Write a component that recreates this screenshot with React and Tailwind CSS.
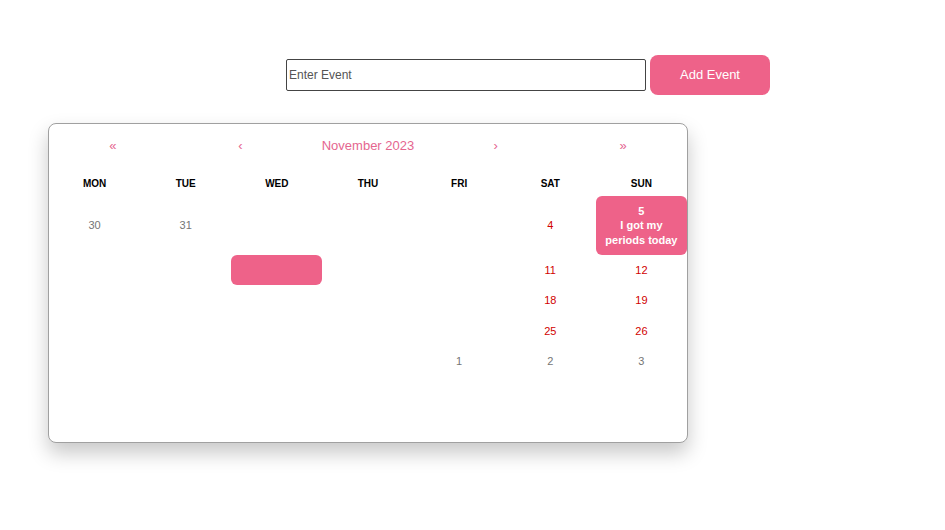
import React from "react";

const PINK = "bg-[#ee6289]";

function Cell({ children, kind, h }) {
  const base = "flex items-center justify-center text-center text-[11px] leading-[14.5px]";
  if (kind === "tile")
    return <div className={`${base} ${PINK} text-white font-bold rounded-md ${h}`}>{children}</div>;
  if (kind === "blank-tile")
    return <div className={`${base} ${PINK} text-transparent rounded-md ${h}`}>{children}</div>;
  const color =
    kind === "gray" ? "text-[#757575]" : kind === "red" ? "text-[#d10000]" : "text-white";
  return <div className={`${base} ${color} ${h}`}>{children}</div>;
}

export default function App() {
  const rows = [
    [["30", "gray"], ["31", "gray"], ["1", "w"], ["2", "w"], ["3", "w"], ["4", "red"], ["tile", "tile"]],
    [["6", "w"], ["7", "w"], ["8", "blank-tile"], ["9", "w"], ["10", "w"], ["11", "red"], ["12", "red"]],
    [["13", "w"], ["14", "w"], ["15", "w"], ["16", "w"], ["17", "w"], ["18", "red"], ["19", "red"]],
    [["20", "w"], ["21", "w"], ["22", "w"], ["23", "w"], ["24", "w"], ["25", "red"], ["26", "red"]],
    [["27", "w"], ["28", "w"], ["29", "w"], ["30", "w"], ["1", "gray"], ["2", "gray"], ["3", "gray"]],
  ];
  const days = ["MON", "TUE", "WED", "THU", "FRI", "SAT", "SUN"];
  return (
    <div className="min-h-[530px] bg-white font-['Liberation_Sans',Arial,sans-serif] pt-[55px]">
      <div className="flex items-center gap-1 pl-[286px]">
        <input
          className="w-[360px] h-[32px] border border-[#444] rounded-[2px] px-[2px] text-[12px] text-black placeholder:text-[#555] outline-none"
          placeholder="Enter Event"
        />
        <button className={`w-[120px] h-[40px] ${PINK} text-white text-[13px] rounded-lg`}>Add Event</button>
      </div>
      <div className="ml-[48px] mt-[28px] w-[640px] h-[320px] border border-[#a0a0a0] rounded-lg bg-white shadow-[0_10px_20px_rgba(0,0,0,0.22)]">
        <div className="grid grid-cols-5 h-[44px] items-center text-[#e5668f] text-[13px]">
          <div className="text-center">«</div>
          <div className="text-center">‹</div>
          <div className="text-center">November 2023</div>
          <div className="text-center">›</div>
          <div className="text-center">»</div>
        </div>
        <div className="grid grid-cols-7 h-[28px] items-center pt-[2px]">
          {days.map((d) => (
            <div key={d} className="text-center text-[10px] font-bold text-black">{d}</div>
          ))}
        </div>
        {rows.map((row, i) => (
          <div key={i} className="grid grid-cols-7">
            {row.map(([t, k], j) => (
              <Cell key={j} kind={k} h={i === 0 ? "h-[59px]" : "h-[30.4px]"}>
                {t === "tile" ? (
                  <span>5<br />I got my<br />periods today</span>
                ) : (
                  t
                )}
              </Cell>
            ))}
          </div>
        ))}
      </div>
    </div>
  );
}
